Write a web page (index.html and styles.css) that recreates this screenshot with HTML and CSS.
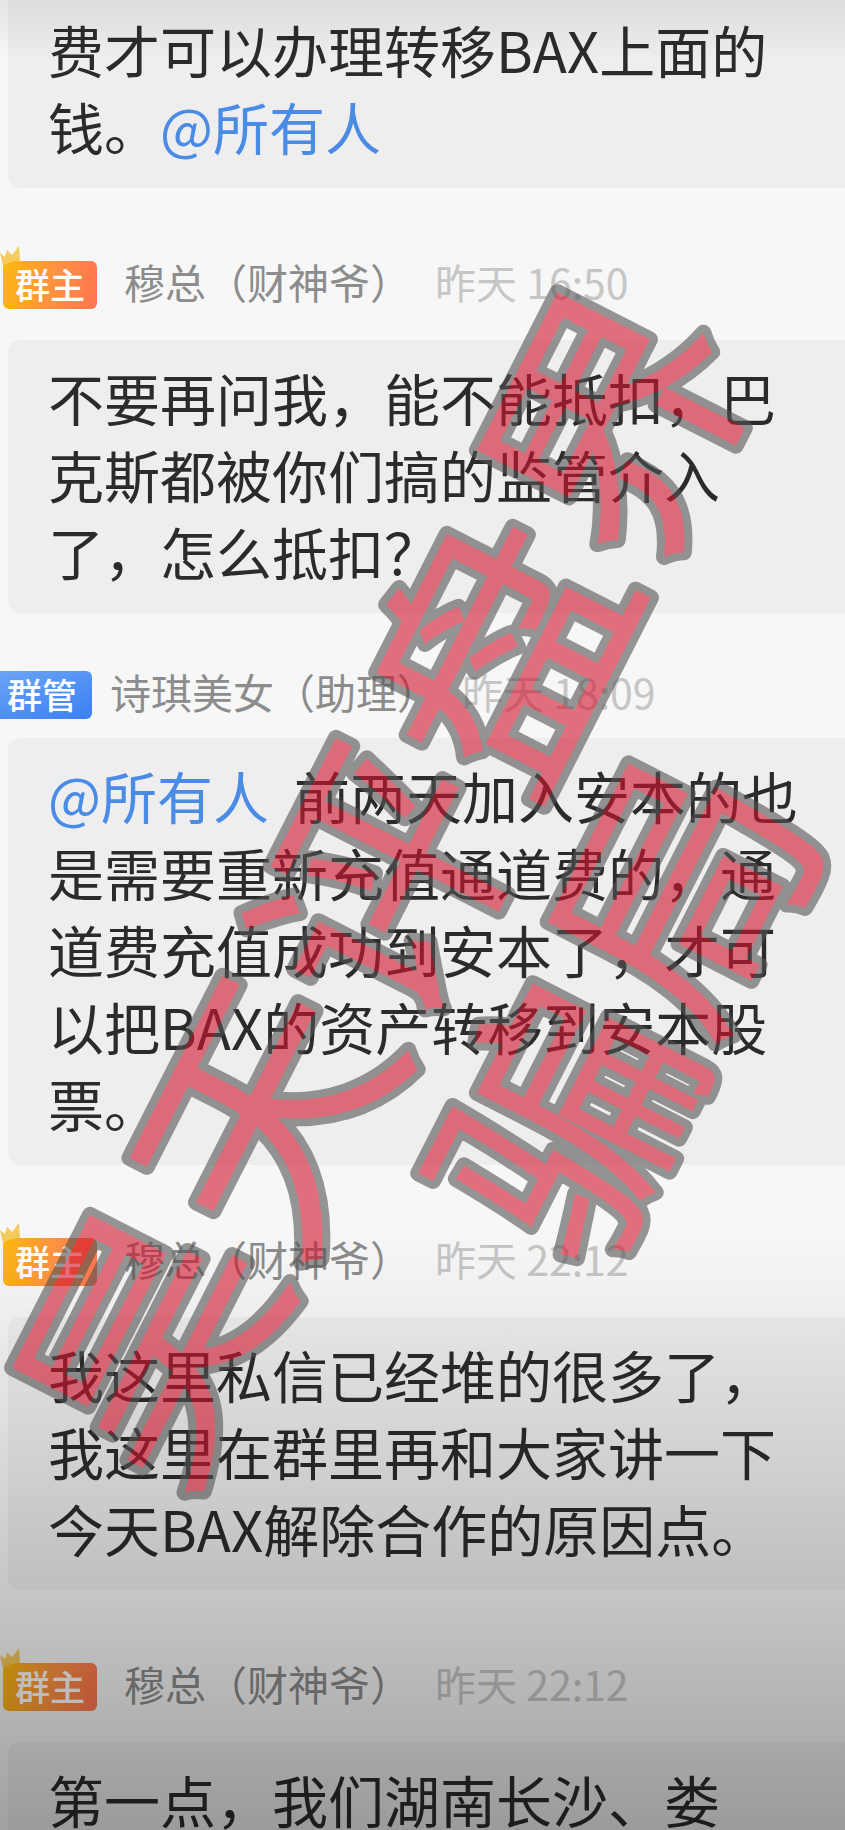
FILE: index.html
```html
<!DOCTYPE html>
<html lang="zh-CN">
<head>
  <meta charset="UTF-8">
  <title>群聊</title>
  <link rel="stylesheet" href="styles.css">
</head>
<body>
  <svg class="defs" width="0" height="0" aria-hidden="true">
    <symbol id="crown" viewBox="0 0 22 22">
      <path d="M0 8 L5 12 L7 5 L12 10 L19 1 L20 16 Q10 16 3 21 Z" fill="#f5cb5c"/>
    </symbol>
  </svg>

  <main class="chat">
    <div class="bubble bubble-first">费才可以办理转移BAX上面的<br>钱。<a class="mention" href="#">@所有人</a></div>

    <div class="header owner">
      <span class="badge">群主<svg class="crown"><use href="#crown"/></svg></span>
      <span class="name">穆总（财神爷）</span>
      <span class="time">昨天 16:50</span>
    </div>
    <div class="bubble">不要再问我，能不能抵扣，巴<br>克斯都被你们搞的监管介入<br>了，怎么抵扣？</div>

    <div class="header admin">
      <span class="badge">群管</span>
      <span class="name">诗琪美女（助理）</span>
      <span class="time">昨天 18:09</span>
    </div>
    <div class="bubble"><a class="mention" href="#">@所有人</a>&nbsp; 前两天加入安本的也<br>是需要重新充值通道费的，通<br>道费充值成功到安本了，才可<br>以把BAX的资产转移到安本股<br>票。</div>

    <div class="header owner">
      <span class="badge">群主<svg class="crown"><use href="#crown"/></svg></span>
      <span class="name">穆总（财神爷）</span>
      <span class="time">昨天 22:12</span>
    </div>
    <div class="bubble">我这里私信已经堆的很多了，<br>我这里在群里再和大家讲一下<br>今天BAX解除合作的原因点。</div>

    <div class="header owner">
      <span class="badge">群主<svg class="crown"><use href="#crown"/></svg></span>
      <span class="name">穆总（财神爷）</span>
      <span class="time">昨天 22:12</span>
    </div>
    <div class="bubble">第一点，我们湖南长沙、娄</div>

    <div class="shade"></div>
    <svg class="watermark" viewBox="0 0 845 1830">
      <g transform="translate(506 945) rotate(-63)">
        <text x="0" y="-42">昊天评盘界</text>
        <text x="0" y="230">骗局</text>
      </g>
    </svg>
  </main>
</body>
</html>
```
FILE: styles.css
```css
body {
  margin: 0;
  background: #f7f7f7;
  font-family: 'Noto Sans CJK SC', sans-serif;
}

.defs {
  position: absolute;
}

.chat {
  position: relative;
  height: 100vh;
  overflow: hidden;
}

.bubble {
  margin-left: 8px;
  padding: 18px 0 24px 40px;
  background: #eeeeee;
  border-radius: 12px 0 0 12px;
  color: #2b2b2b;
  font-size: 56px;
  line-height: 77px;
  white-space: nowrap;
}

.bubble-first {
  padding-top: 10px;
  border-top-left-radius: 0;
}

.mention {
  color: #4a8be6;
  text-decoration: none;
}

.header {
  display: flex;
  align-items: center;
  height: 48px;
  font-size: 41px;
  line-height: 40px;
  white-space: nowrap;
}

.owner {
  padding: 73px 0 31px 3px;
}

.admin {
  padding: 58px 0 19px;
}

.badge {
  position: relative;
  width: 94px;
  height: 48px;
  margin-right: 27px;
  border-radius: 6px;
  background: linear-gradient(100deg, #fcb90c, #ff9440 50%, #ff7551);
  color: #fff;
  font-size: 35px;
  font-weight: 500;
  line-height: 45px;
  text-align: center;
}

.admin .badge {
  width: 84px;
  padding-right: 8px;
  margin-right: 18px;
  border-radius: 0 6px 6px 0;
  background: linear-gradient(160deg, #6aa4f5, #3b80f3);
}

.crown {
  position: absolute;
  left: -3px;
  top: -16px;
  width: 22px;
  height: 22px;
}

.name,
.time {
  padding-bottom: 8px;
}

.name {
  margin-right: 24px;
  color: #8c8c8c;
}

.time {
  color: #c6c6c6;
}

.shade {
  position: absolute;
  inset: 0;
  background:
    linear-gradient(rgba(0, 0, 0, 0.08), rgba(0, 0, 0, 0) 60px),
    linear-gradient(rgba(0, 0, 0, 0) 67%, rgba(0, 0, 0, 0.04) 72%, rgba(0, 0, 0, 0.2) 87%, rgba(0, 0, 0, 0.35));
  pointer-events: none;
}

/* two centred lines running up the page */
.watermark {
  position: absolute;
  left: 0;
  top: 0;
  width: 100%;
  opacity: 0.6;
  pointer-events: none;
}

.watermark text {
  fill: #d2142b;
  stroke: #525452;
  stroke-width: 16px;
  stroke-linejoin: round;
  paint-order: stroke fill;
  font-size: 258px;
  text-anchor: middle;
}
```
